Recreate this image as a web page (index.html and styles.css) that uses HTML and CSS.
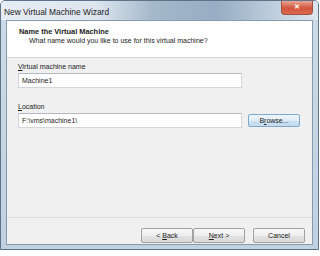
FILE: index.html
```html
<!DOCTYPE html>
<html lang="en">

<head>
    <meta charset="UTF-8">
    <meta name="viewport" content="width=device-width, initial-scale=1.0">
    <title>New Virtual Machine Wizard</title>
    <link rel="stylesheet" href="styles.css">
</head>

<body>
    <!-- Cửa sổ wizard -->
    <div class="window">
        <div class="titlebar">
            <span class="title">New Virtual Machine Wizard</span>
            <span class="close">&#x2715;</span>
        </div>
        <div class="client">
            <!-- Phần đầu trắng -->
            <div class="header">
                <div class="header-title">Name the Virtual Machine</div>
                <div class="header-sub">What name would you like to use for this virtual machine?</div>
            </div>
            <!-- Nội dung -->
            <div class="content">
                <label class="label"><u>V</u>irtual machine name</label>
                <div class="field name-field">Machine1</div>
                <label class="label location"><u>L</u>ocation</label>
                <div class="row">
                    <div class="field">F:\vms\machine1\</div>
                    <button class="btn browse">B<u>r</u>owse...</button>
                </div>
            </div>
            <!-- Nút dưới -->
            <div class="footer">
                <button class="btn">&lt; <u>B</u>ack</button>
                <button class="btn"><u>N</u>ext &gt;</button>
                <button class="btn cancel">Cancel</button>
            </div>
        </div>
    </div>
</body>

</html>
```

FILE: styles.css
```css
/* Trang */
body {
    margin: 0;
    background: #ffffff;
    font-family: "Liberation Sans", Arial, sans-serif;
    color: #1c1c1c;
}

/* Khung cửa sổ */
.window {
    width: 319px;
    height: 250px;
    box-sizing: border-box;
    border: 1px solid #5f7388;
    border-radius: 5px 5px 0 0;
    background: linear-gradient(to bottom, #cddbe9, #c0d1e1);
    padding: 0 5px 4px;
    display: flex;
    flex-direction: column;
}

.titlebar {
    height: 19px;
    margin: 0 -5px;
    padding: 0 5px 0 3px;
    display: flex;
    align-items: center;
    background: linear-gradient(to right, #e6edf4 0%, #dde6ef 30%, #a4b8cb 48%, #96adc3 68%, #c3d2e0 88%, #dce6ef 100%);
    border-radius: 4px 4px 0 0;
}

.title {
    font-size: 8.4px;
    color: #222;
    padding-top: 3px;
}

.close {
    margin-left: auto;
    align-self: flex-start;
    width: 30px;
    height: 13px;
    background: linear-gradient(to bottom, #e8a596, #d2553d 55%, #d8694f);
    border: 1px solid #a3503e;
    border-top: none;
    border-radius: 0 0 4px 4px;
    color: #fff;
    font-size: 7px;
    font-weight: bold;
    text-align: center;
    line-height: 12px;
}

.client {
    flex: 1;
    border: 1px solid #8799ab;
    background: #f0f0f0;
    display: flex;
    flex-direction: column;
}

/* Phần đầu */
.header {
    height: 37px;
    background: #ffffff;
    border-bottom: 1px solid #d6d6d6;
    padding: 6px 0 0 12px;
    box-sizing: border-box;
}

.header-title {
    font-size: 7.4px;
    font-weight: bold;
    line-height: 9px;
}

.header-sub {
    font-size: 7px;
    line-height: 10px;
    padding-left: 10px;
}

/* Nội dung */
.content {
    flex: 1;
    padding: 4px 0 0 11px;
}

.label {
    display: block;
    font-size: 7px;
    line-height: 10px;
    margin-bottom: 1px;
}

.location {
    margin-top: 14px;
}

.field {
    width: 224px;
    height: 15px;
    box-sizing: border-box;
    background: #ffffff;
    border: 1px solid #d3d6db;
    border-top-color: #b5b9bf;
    font-size: 7px;
    line-height: 13px;
    padding-left: 3px;
}

.row {
    display: flex;
    align-items: center;
    gap: 6px;
}

/* Nút */
.btn {
    width: 52px;
    height: 15px;
    padding: 0;
    font-family: "Liberation Sans", Arial, sans-serif;
    font-size: 7px;
    color: #222;
    border: 1px solid #a0a0a0;
    border-radius: 2px;
    background: linear-gradient(to bottom, #f8f8f8 0%, #eeeeee 50%, #e2e2e2 51%, #d9d9d9 100%);
}

.browse {
    height: 13px;
    border-color: #7eaacb;
    background: linear-gradient(to bottom, #eef6fc 0%, #e0edf7 50%, #cfe2f2 51%, #c4dbee 100%);
}

.footer {
    height: 27px;
    box-sizing: border-box;
    border-top: 1px solid #dcdcdc;
    display: flex;
    justify-content: flex-end;
    align-items: flex-start;
    padding: 10px 7px 0 0;
}

.cancel {
    margin-left: 8px;
}
```
